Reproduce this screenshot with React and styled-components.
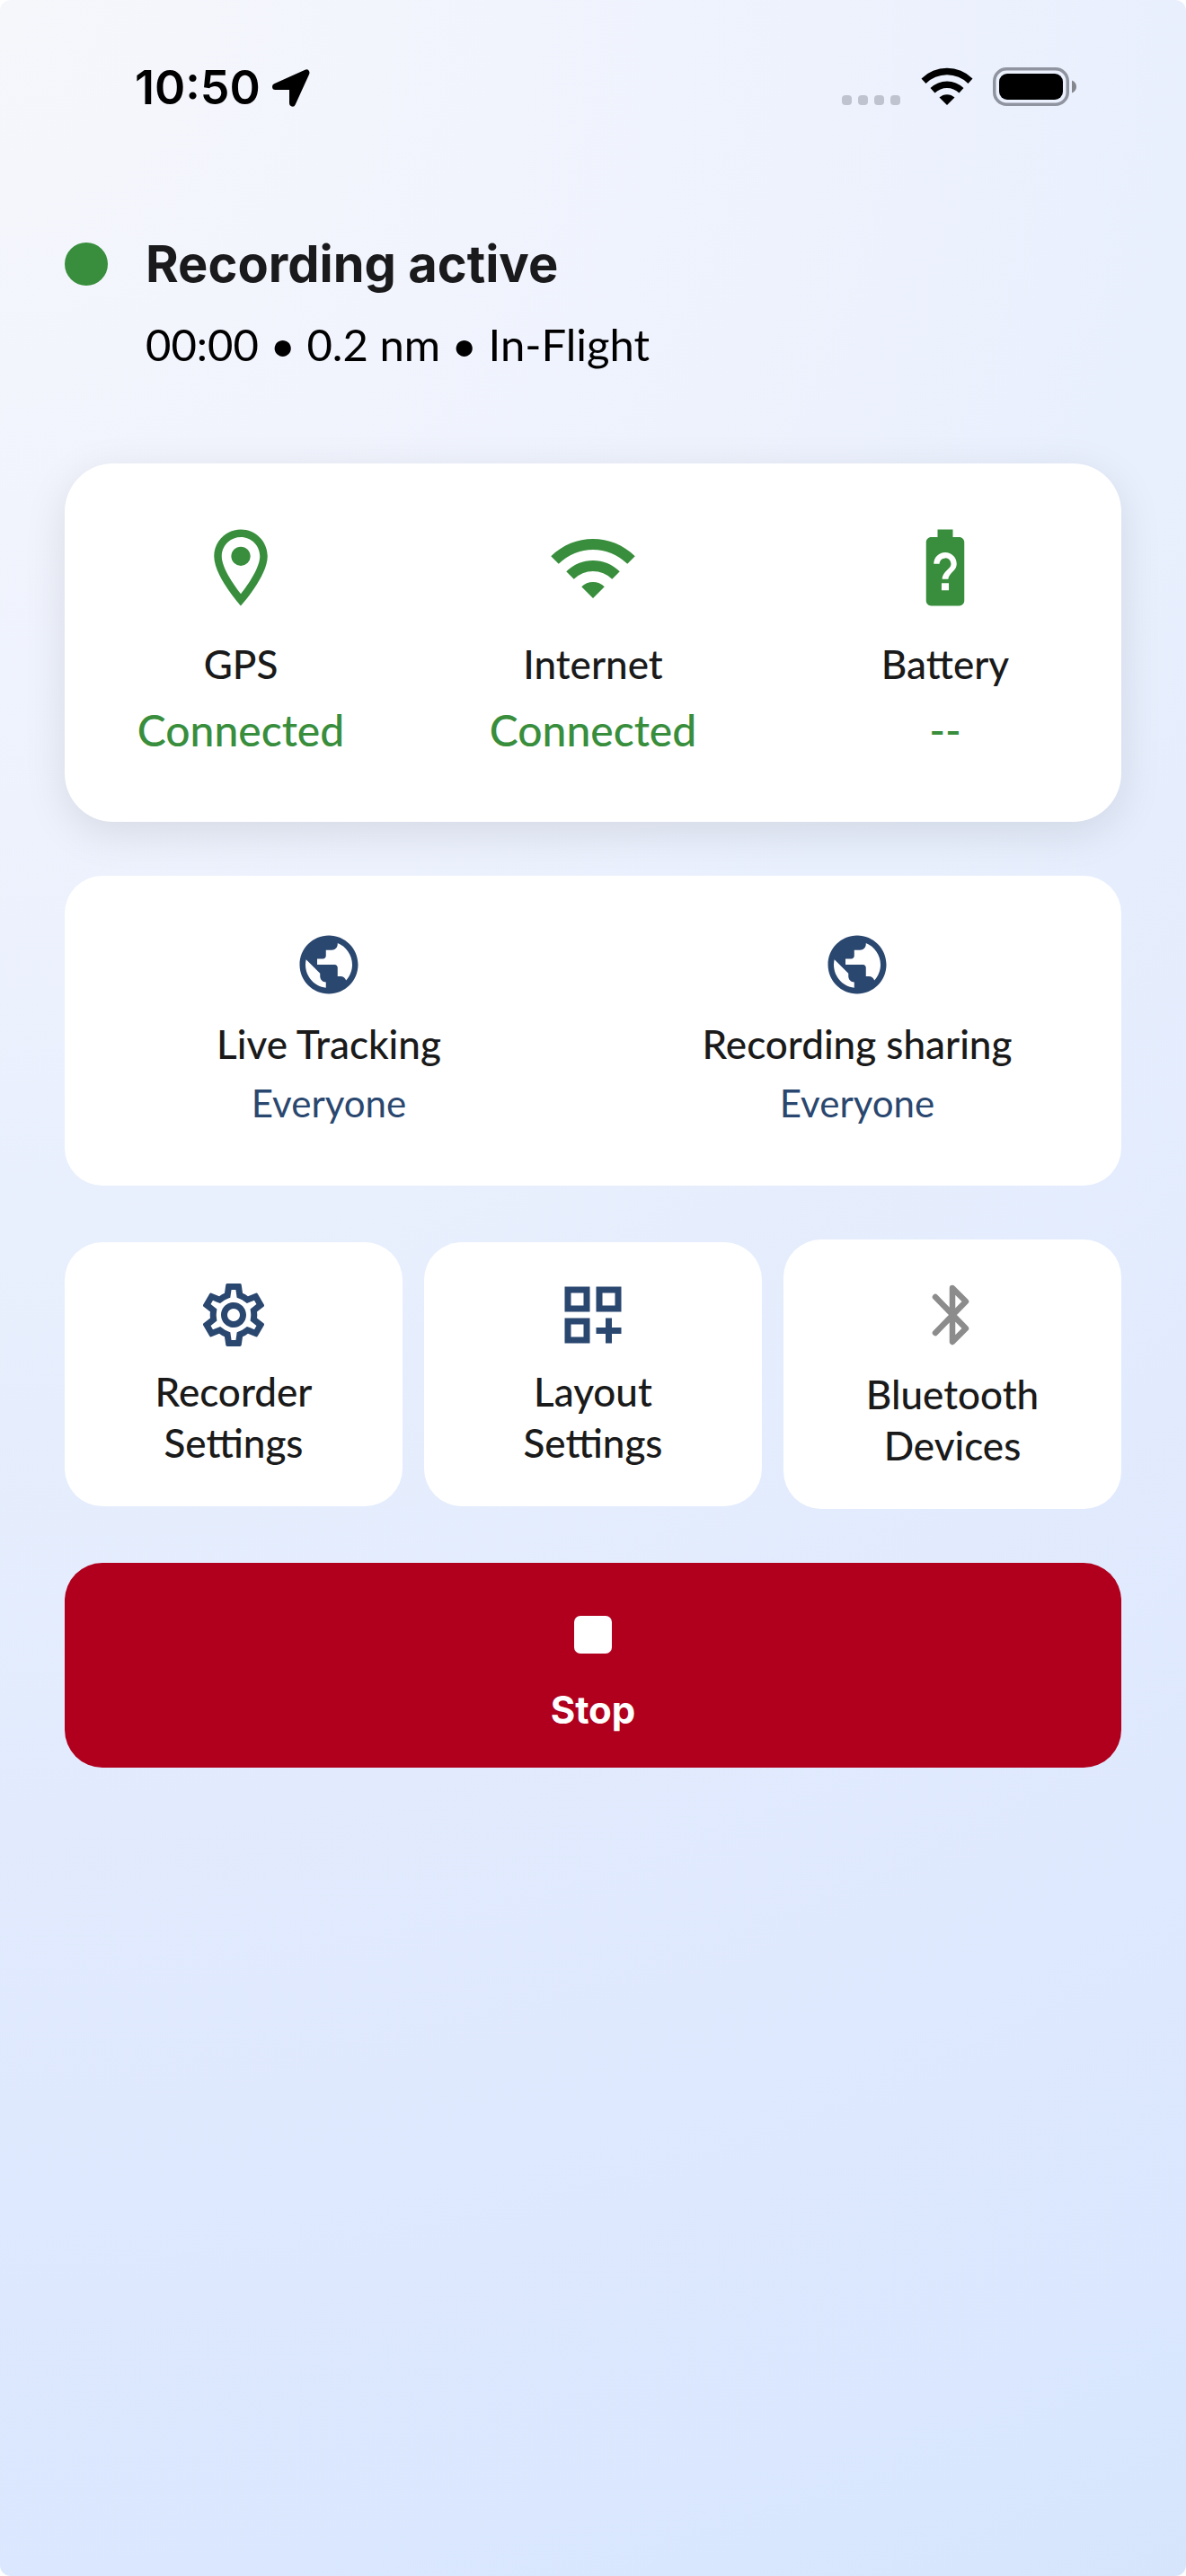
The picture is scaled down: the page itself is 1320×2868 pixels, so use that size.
import React, { useState } from "react";
import styled, { createGlobalStyle } from "styled-components";
import {
  MdOutlineLocationOn,
  MdWifi,
  MdBatteryUnknown,
  MdPublic,
  MdOutlineSettings,
  MdOutlineDashboardCustomize,
} from "react-icons/md";

const GlobalStyle = createGlobalStyle`
  * {
    box-sizing: border-box;
  }

  body {
    margin: 0;
    background-color: #ffffff;
    font-family: Lato, "Noto Sans", sans-serif;
  }
`;

const Screen = styled.div`
  display: flex;
  flex-direction: column;
  min-height: 100vh;
  border-radius: 12px;
  background: radial-gradient(
    circle farthest-corner at top left,
    #f6f7fb 0%,
    #f3f5fd 13%,
    #e6eefd 50%,
    #dee8fe 78%,
    #d9e7fe 94%,
    #d6e5fb 100%
  );
`;

const StatusBar = styled.header`
  display: flex;
  justify-content: space-between;
  align-items: center;
  padding: 64px 121px 0 150px;
  height: 128px;
`;

const Clock = styled.div`
  display: flex;
  align-items: center;
  gap: 12px;
  padding-top: 4px;
  font-family: Inter, sans-serif;
  font-size: 52px;
  font-weight: 600;
  line-height: 64px;
  color: #000000;
`;

const Indicators = styled.div`
  display: flex;
  align-items: center;
  gap: 22px;
`;

const Main = styled.main`
  display: flex;
  flex-direction: column;
  gap: 60px;
  padding: 130px 72px 72px;
`;

const Recording = styled.section`
  display: grid;
  grid-template-columns: 48px 1fr;
  align-items: center;
  column-gap: 42px;
  row-gap: 20px;
  padding-bottom: 40px;
`;

const Dot = styled.span`
  width: 48px;
  height: 48px;
  border-radius: 50%;
  background-color: #388e3c;
`;

const Title = styled.h1`
  margin: 0;
  font-family: Inter, sans-serif;
  font-size: 56px;
  font-weight: 700;
  line-height: 72px;
  color: #1a1a1c;
`;

const Summary = styled.p`
  grid-column: 2;
  margin: 0;
  font-size: 49px;
  line-height: 66px;
  color: #000000;
`;

const Card = styled.section`
  display: grid;
  grid-auto-columns: 1fr;
  grid-auto-flow: column;
  border-radius: 42px;
  background-color: #ffffff;
`;

const StatusCard = styled(Card)`
  padding: 65px 0 69px;
  border-radius: 54px;
  box-shadow: 0 12px 48px rgba(0, 0, 0, 0.1);
`;

const Status = styled.div`
  display: flex;
  flex-direction: column;
  align-items: center;
  color: #388e3c;
`;

const Label = styled.span`
  font-size: 44px;
  font-weight: 500;
  line-height: 57px;
  text-align: center;
  color: #1a1a1a;
`;

const StatusLabel = styled(Label)`
  margin-top: 28px;
`;

const StatusValue = styled.span`
  margin-top: 12px;
  font-size: 48px;
  font-weight: 500;
  line-height: 66px;
`;

const Sharing = styled.button`
  display: flex;
  flex-direction: column;
  align-items: center;
  gap: 9px;
  padding: 60px 0 63px;
  border: none;
  background: none;
  font-family: inherit;
  color: #2a476f;
  cursor: pointer;

  svg {
    margin-bottom: 12px;
  }
`;

const SharingValue = styled.span`
  font-size: 42px;
  font-weight: 400;
  line-height: 57px;
`;

const Tiles = styled.nav`
  display: grid;
  grid-template-columns: repeat(3, 1fr);
  align-items: center;
  gap: 24px;
`;

const Tile = styled.button`
  display: flex;
  flex-direction: column;
  align-items: center;
  gap: 15px;
  padding: 39px 60px 42px;
  border: none;
  border-radius: 42px;
  background-color: #ffffff;
  font-family: inherit;
  color: ${(props) => (props.$off ? "#8c8c8c" : "#2a476f")};
  cursor: pointer;
`;

const StopButton = styled.button`
  display: flex;
  flex-direction: column;
  align-items: center;
  gap: 36px;
  padding: 59px 0 37px;
  border: none;
  border-radius: 42px;
  background-color: #b0001e;
  font-family: Inter, sans-serif;
  font-size: 42px;
  font-weight: 700;
  line-height: 54px;
  color: #ffffff;
  cursor: pointer;
`;

const StopIcon = styled.span`
  width: 42px;
  height: 42px;
  border-radius: 7px;
  background-color: #ffffff;
`;

const LocationArrow = () => (
  <svg width="44" height="44" viewBox="0 0 44 44" aria-hidden="true">
    <path
      d="M4.5 20.5 39 5 23.500 39V20.500Z"
      fill="currentColor"
      stroke="currentColor"
      strokeWidth="7"
      strokeLinejoin="round"
    />
  </svg>
);

const SignalDots = () => (
  <svg width="66" height="42" viewBox="0 0 66 42" aria-hidden="true">
    {[0, 18, 36, 54].map((x) => (
      <rect key={x} x={x} y="31" width="11" height="11" rx="4" fill="#bfc3cf" />
    ))}
  </svg>
);

const WifiSignal = () => (
  <svg width="58" height="42" viewBox="0 0 58 42" aria-hidden="true">
    <path d="M0.5 12.5A40.5 40.5 0 0 1 57.5 12.5L52.5 18A33.5 33.5 0 0 0 5.5 18Z" />
    <path d="M10.5 23A26.5 26.5 0 0 1 47.5 23L42.5 28.5A19.5 19.5 0 0 0 15.5 28.5Z" />
    <path d="M20.5 33.5A12.5 12.5 0 0 1 37.5 33.5L29 42Z" />
  </svg>
);

const PhoneBattery = () => (
  <svg width="94" height="43" viewBox="0 0 94 43" aria-hidden="true">
    <rect
      x="1.75"
      y="1.75"
      width="81.5"
      height="39.5"
      rx="13.5"
      fill="none"
      stroke="#9094a0"
      strokeWidth="3.5"
    />
    <rect x="7" y="7" width="71" height="29" rx="9" fill="#000000" />
    <path d="M88 14.5C91.5 16 93 18.5 93 21.5S91.5 27 88 28.5Z" fill="#85878f" />
  </svg>
);

const BluetoothIcon = () => (
  <svg width="90" height="90" viewBox="-3 -3 90 90" aria-hidden="true">
    <path
      d="M23 22 57 57 42 72V12L57 27 23 62"
      fill="none"
      stroke="currentColor"
      strokeWidth="6.5"
      strokeLinecap="round"
      strokeLinejoin="round"
    />
  </svg>
);

const statuses = [
  { name: "GPS", value: "Connected", Icon: MdOutlineLocationOn },
  { name: "Internet", value: "Connected", Icon: MdWifi },
  { name: "Battery", value: "--", Icon: MdBatteryUnknown },
];

const sharing = [
  { name: "Live Tracking", value: "Everyone" },
  { name: "Recording sharing", value: "Everyone" },
];

const App = () => {
  const [recording, setRecording] = useState(true);

  return (
    <>
      <GlobalStyle />
      <Screen>
        <StatusBar>
          <Clock>
            10:50
            <LocationArrow />
          </Clock>
          <Indicators>
            <SignalDots />
            <WifiSignal />
            <PhoneBattery />
          </Indicators>
        </StatusBar>
        <Main>
          <Recording>
            <Dot />
            <Title>{recording ? "Recording active" : "Recording stopped"}</Title>
            <Summary>00:00 • 0.2 nm • In-Flight</Summary>
          </Recording>
          <StatusCard>
            {statuses.map(({ name, value, Icon }) => (
              <Status key={name}>
                <Icon size={102} />
                <StatusLabel>{name}</StatusLabel>
                <StatusValue>{value}</StatusValue>
              </Status>
            ))}
          </StatusCard>
          <Card>
            {sharing.map(({ name, value }) => (
              <Sharing key={name} type="button">
                <MdPublic size={78} />
                <Label>{name}</Label>
                <SharingValue>{value}</SharingValue>
              </Sharing>
            ))}
          </Card>
          <Tiles>
            <Tile type="button">
              <MdOutlineSettings size={84} />
              <Label>Recorder Settings</Label>
            </Tile>
            <Tile type="button">
              <MdOutlineDashboardCustomize size={84} />
              <Label>Layout Settings</Label>
            </Tile>
            <Tile type="button" $off>
              <BluetoothIcon />
              <Label>Bluetooth Devices</Label>
            </Tile>
          </Tiles>
          <StopButton type="button" onClick={() => setRecording(false)}>
            <StopIcon />
            Stop
          </StopButton>
        </Main>
      </Screen>
    </>
  );
};

export default App;
